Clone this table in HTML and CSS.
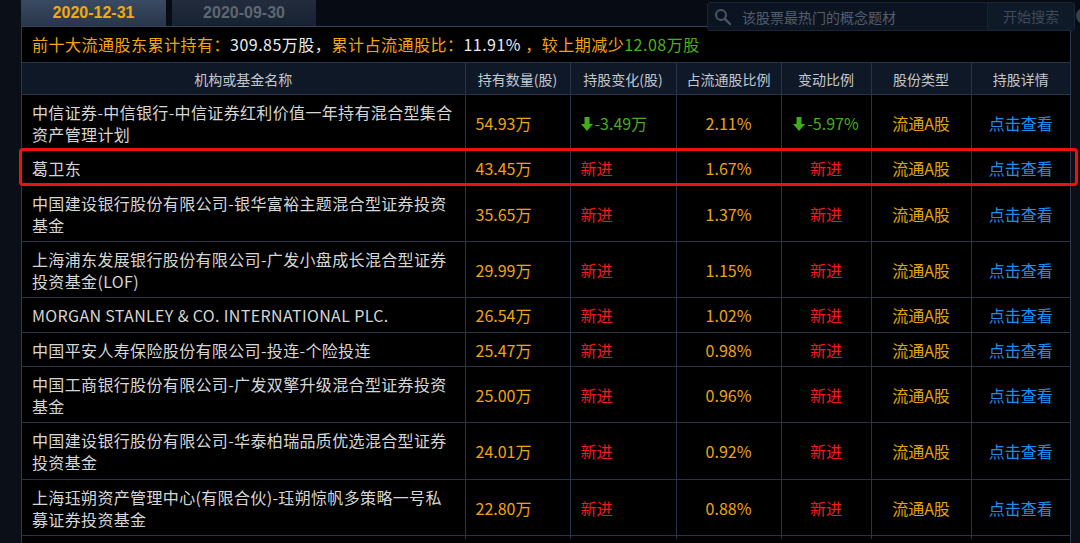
FILE: index.html
```html
<!DOCTYPE html>
<html lang="zh-CN">
<head>
<meta charset="utf-8">
<title>十大流通股东</title>
<link rel="stylesheet" href="styles.css">
</head>
<body>
<div class="page">
  <div class="topbar">
    <div class="tab tab-active">2020-12-31</div>
    <div class="tab tab-idle">2020-09-30</div>
    <div class="search">
      <svg class="mag" width="18" height="18" viewBox="0 0 18 18"><circle cx="7" cy="7" r="5" fill="none" stroke="#4a5566" stroke-width="2"/><path d="M10.8 10.8L16 16" stroke="#4a5566" stroke-width="2.4" stroke-linecap="round"/></svg>
      <span class="search-text">该股票最热门的概念题材</span>
      <span class="search-btn">开始搜索</span>
    </div>
    <span class="knob"></span>
  </div>
  <div class="panel">
    <div class="summary">
      <span class="o">前十大流通股东累计持有：</span><span class="w">309.85万股，</span><span class="o">累计占流通股比：</span><span class="w">11.91%</span><span class="o"> ，较上期减少</span><span class="g">12.08万股</span>
    </div>
    <table class="grid">
      <colgroup>
        <col class="c1"><col class="c2"><col class="c3"><col class="c4"><col class="c5"><col class="c6"><col class="c7">
      </colgroup>
      <thead>
        <tr><th>机构或基金名称</th><th>持有数量(股)</th><th>持股变化(股)</th><th>占流通股比例</th><th>变动比例</th><th>股份类型</th><th>持股详情</th></tr>
      </thead>
      <tbody>
        <tr>
          <td class="name">中信证券-中信银行-中信证券红利价值一年持有混合型集合资产管理计划</td>
          <td class="qty">54.93万</td>
          <td class="chg down"><svg class="arr" width="12" height="14" viewBox="0 0 12 14"><path d="M3.5 0h5v7h3.5L6 14 0 7h3.5z" fill="#3fae1a"/></svg>-3.49万</td>
          <td class="pct">2.11%</td>
          <td class="ratio down"><svg class="arr" width="12" height="14" viewBox="0 0 12 14"><path d="M3.5 0h5v7h3.5L6 14 0 7h3.5z" fill="#3fae1a"/></svg>-5.97%</td>
          <td class="type">流通A股</td>
          <td class="link">点击查看</td>
        </tr>
        <tr>
          <td class="name marked">葛卫东<span class="mark"></span></td>
          <td class="qty">43.45万</td>
          <td class="chg new">新进</td>
          <td class="pct">1.67%</td>
          <td class="ratio new">新进</td>
          <td class="type">流通A股</td>
          <td class="link">点击查看</td>
        </tr>
        <tr>
          <td class="name">中国建设银行股份有限公司-银华富裕主题混合型证券投资基金</td>
          <td class="qty">35.65万</td>
          <td class="chg new">新进</td>
          <td class="pct">1.37%</td>
          <td class="ratio new">新进</td>
          <td class="type">流通A股</td>
          <td class="link">点击查看</td>
        </tr>
        <tr>
          <td class="name">上海浦东发展银行股份有限公司-广发小盘成长混合型证券投资基金(LOF)</td>
          <td class="qty">29.99万</td>
          <td class="chg new">新进</td>
          <td class="pct">1.15%</td>
          <td class="ratio new">新进</td>
          <td class="type">流通A股</td>
          <td class="link">点击查看</td>
        </tr>
        <tr>
          <td class="name">MORGAN STANLEY &amp; CO. INTERNATIONAL PLC.</td>
          <td class="qty">26.54万</td>
          <td class="chg new">新进</td>
          <td class="pct">1.02%</td>
          <td class="ratio new">新进</td>
          <td class="type">流通A股</td>
          <td class="link">点击查看</td>
        </tr>
        <tr>
          <td class="name">中国平安人寿保险股份有限公司-投连-个险投连</td>
          <td class="qty">25.47万</td>
          <td class="chg new">新进</td>
          <td class="pct">0.98%</td>
          <td class="ratio new">新进</td>
          <td class="type">流通A股</td>
          <td class="link">点击查看</td>
        </tr>
        <tr>
          <td class="name">中国工商银行股份有限公司-广发双擎升级混合型证券投资基金</td>
          <td class="qty">25.00万</td>
          <td class="chg new">新进</td>
          <td class="pct">0.96%</td>
          <td class="ratio new">新进</td>
          <td class="type">流通A股</td>
          <td class="link">点击查看</td>
        </tr>
        <tr>
          <td class="name">中国建设银行股份有限公司-华泰柏瑞品质优选混合型证券投资基金</td>
          <td class="qty">24.01万</td>
          <td class="chg new">新进</td>
          <td class="pct">0.92%</td>
          <td class="ratio new">新进</td>
          <td class="type">流通A股</td>
          <td class="link">点击查看</td>
        </tr>
        <tr>
          <td class="name">上海珏朔资产管理中心(有限合伙)-珏朔惊帆多策略一号私募证券投资基金</td>
          <td class="qty">22.80万</td>
          <td class="chg new">新进</td>
          <td class="pct">0.88%</td>
          <td class="ratio new">新进</td>
          <td class="type">流通A股</td>
          <td class="link">点击查看</td>
        </tr>
        <tr class="tail">
          <td></td><td></td><td></td><td></td><td></td><td></td><td></td>
        </tr>
      </tbody>
    </table>
  </div>
</div>
</body>
</html>
```

FILE: styles.css
```css
html, body {
  margin: 0;
  padding: 0;
}
body {
  width: 1080px;
  height: 543px;
  overflow: hidden;
  background: #0a0f18;
  font-family: "Noto Sans CJK SC", "Noto Sans", sans-serif;
}
.page {
  display: flex;
  flex-direction: column;
  padding-left: 21px;
  width: 1050px;
  height: 543px;
}
.topbar {
  position: relative;
  display: flex;
  align-items: flex-start;
  height: 26px;
  flex: none;
  background: #060b14;
  width: 1059px;
}
.tab {
  height: 26px;
  line-height: 26px;
  text-align: center;
  font-family: "Liberation Sans", Arial, sans-serif;
  font-weight: bold;
  font-size: 16px;
}
.tab-active {
  width: 145px;
  background: linear-gradient(#3a4a62, #28364b);
  color: #f2ab0c;
}
.tab-idle {
  width: 144px;
  margin-left: 6px;
  background: linear-gradient(#222c3c, #182131);
  color: #5e6672;
}
.search {
  position: relative;
  z-index: 2;
  display: flex;
  align-items: center;
  margin-left: auto;
  margin-top: 2px;
  margin-right: 5px;
  width: 368px;
  height: 29px;
  box-sizing: border-box;
  border: 1px solid #1a2535;
  border-radius: 3px;
  background: rgba(13, 22, 36, 0.92);
}
.mag {
  margin-left: 6px;
}
.search-text {
  margin-left: 10px;
  font-size: 14px;
  color: #545e6c;
}
.search-btn {
  margin-left: auto;
  width: 86px;
  height: 27px;
  line-height: 27px;
  text-align: center;
  font-size: 14px;
  color: #3e4858;
  background: #0f1a29;
  border-left: 1px solid #172232;
}
.knob {
  position: absolute;
  right: -12px;
  top: 8px;
  width: 16px;
  height: 16px;
  border-radius: 50%;
  background: #3a414c;
}
.panel {
  flex: 1;
  min-height: 0;
  width: 1050px;
  box-sizing: border-box;
  border-top: 1px solid #35445a;
  border-left: 1px solid #2c3a4f;
  border-right: 1px solid #2c3a4f;
  background: #000;
}
.summary {
  height: 35px;
  line-height: 35px;
  padding-left: 10px;
  font-size: 16px;
  letter-spacing: 0.5px;
  background: #000;
  border-bottom: 1px solid #2a3548;
  white-space: nowrap;
}
.o { color: #f2a60c; }
.w { color: #e6ecf2; }
.g { color: #49b01c; }
.grid {
  width: 1048px;
  table-layout: fixed;
  border-collapse: collapse;
}
.c1 { width: 443px; }
.c2 { width: 105px; }
.c3 { width: 106px; }
.c4 { width: 105px; }
.c5 { width: 90px; }
.c6 { width: 100px; }
.c7 { width: 99px; }
.grid th {
  background: #0f1827;
  color: #c3c7ce;
  font-weight: normal;
  font-size: 14px;
  line-height: 20px;
  height: 31px;
  padding: 0;
  text-align: center;
  border: 1px solid #29344a;
  border-top: none;
}
.grid th:first-child { border-left: none; }
.grid th:last-child { border-right: none; }
.grid td {
  font-size: 16px;
  line-height: 22.2px;
  padding: 6px 10px 5px 10px;
  border: 1px solid #29344a;
  vertical-align: middle;
  color: #d2d2d2;
}
.grid td:first-child { border-left: none; }
.grid td:last-child { border-right: none; }
.grid .tail td {
  height: 3px;
  padding: 0;
  line-height: 0;
  font-size: 0;
  border-bottom: none;
}
.grid .name {
  color: #d6d6d6;
  letter-spacing: 0.35px;
}
.grid .marked {
  position: relative;
}
.mark {
  position: absolute;
  left: -3px;
  top: -3px;
  width: 1059px;
  height: 38px;
  box-sizing: border-box;
  border: 3px solid #f01010;
  border-radius: 4px;
  pointer-events: none;
}
.grid .qty {
  color: #f0a40c;
}
.grid .pct {
  color: #eaa412;
  text-align: center;
}
.grid .down {
  color: #48ac1c;
  white-space: nowrap;
}
.grid .ratio {
  text-align: center;
}
.grid .new {
  color: #f21a1a;
}
.arr {
  vertical-align: -1px;
  margin-right: 2px;
}
.grid .type {
  color: #e2a40a;
  text-align: center;
}
.grid .link {
  color: #1b8ff0;
  text-align: center;
}
```
